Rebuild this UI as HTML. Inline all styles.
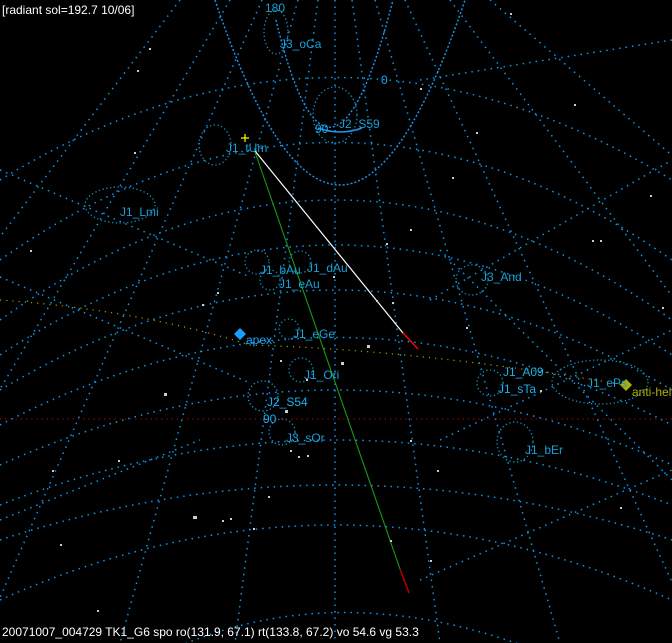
<!DOCTYPE html>
<html><head><meta charset="utf-8"><style>
html,body{margin:0;padding:0;background:#000;width:672px;height:643px;overflow:hidden}
svg{display:block}
text{font-family:"Liberation Sans",sans-serif;font-size:12px}
</style></head><body>
<svg width="672" height="643" viewBox="0 0 672 643" xmlns="http://www.w3.org/2000/svg">
<rect width="672" height="643" fill="#000"/>
<g fill="none" stroke="#0a98f0" stroke-width="1.5" stroke-dasharray="1.5 5">
<!-- parallels -->
<path d="M0,180 Q335,-25 672,180"/>
<path d="M0,260 Q335,25 672,260"/>
<path d="M0,320 Q335,80 672,320"/>
<path d="M0,355 Q335,135 672,355"/>
<path d="M0,390 Q335,190 672,390"/>
<path d="M0,425 Q335,250 672,425"/>
<path d="M0,465 Q335,315 672,465"/>
<path d="M0,505 Q335,375 672,505"/>
<path d="M0,540 Q335,430 672,540"/>
<path d="M0,600 Q335,450 672,600"/>
<path d="M150,660 Q335,565 560,660"/>
<!-- meridians -->
<path d="M180,0 L-200,500"/>
<path d="M230,0 L-150,643"/>
<path d="M262,0 L-20,643"/>
<path d="M298,0 L120,643"/>
<path d="M318,0 L235,643"/>
<path d="M335,0 L335,643"/>
<path d="M352,0 L440,643"/>
<path d="M375,0 L560,643"/>
<path d="M405,0 L700,643"/>
<path d="M450,0 L900,600"/>
<path d="M490,0 L900,350"/>
<!-- extra diagonals -->
<path d="M0,170 L250,277"/>
<path d="M0,277 L250,383"/>
<path d="M420,80 L672,40"/>
<path d="M430,300 L672,160"/>
<path d="M440,440 L672,330"/>
<path d="M420,580 L672,470"/>
<path d="M440,250 L672,480"/>
<path d="M0,520 L200,440"/>
</g>
<!-- U curves -->
<g fill="none" stroke="#1a98f0" stroke-width="1.4" stroke-dasharray="2 2">
<path d="M276,20 Q330,244 393,0"/>
<path d="M215,0 Q340,370 465,0"/>
</g>
<path d="M318,128 Q340,136 362,128" stroke="#1a98f0" stroke-width="1.5" fill="none"/>
<!-- radiant circles -->
<g fill="none" stroke="#1490c0" stroke-width="1.3" stroke-dasharray="1.3 2.5">
<ellipse cx="276" cy="32" rx="12" ry="22"/>
<ellipse cx="335" cy="115" rx="22" ry="28"/>
<ellipse cx="215" cy="145" rx="16" ry="20"/>
<ellipse cx="120" cy="205" rx="35" ry="18"/>
<circle cx="257" cy="262" r="12"/>
<circle cx="300" cy="262" r="11"/>
<circle cx="270" cy="280" r="10"/>
<circle cx="289" cy="329" r="10"/>
<circle cx="301" cy="370" r="12"/>
<circle cx="263" cy="396" r="15" stroke="#1aa0e0"/>
<circle cx="282" cy="432" r="13"/>
<ellipse cx="472" cy="280" rx="16" ry="15"/>
<circle cx="490" cy="383" r="13"/>
<ellipse cx="600" cy="382" rx="48" ry="22"/>
<ellipse cx="515" cy="442" rx="18" ry="20"/>
</g>
<!-- ecliptic & red line -->
<path d="M0,300 Q140,310 250,345 Q420,350 625,385" fill="none" stroke="#a0a000" stroke-width="1.2" stroke-dasharray="1.2 5"/>
<line x1="0" y1="419" x2="672" y2="419" stroke="#a00" stroke-width="1.2" stroke-dasharray="1.2 4"/>
<!-- meteor lines -->
<line x1="255" y1="151" x2="403" y2="333" stroke="#fff" stroke-width="1.2"/>
<line x1="403" y1="333" x2="418" y2="349" stroke="#f00" stroke-width="1.5"/>
<line x1="255" y1="152" x2="400" y2="569" stroke="#1a9a1a" stroke-width="1.1"/>
<line x1="400" y1="569" x2="409" y2="593" stroke="#a00" stroke-width="1.6"/>
<path d="M245,134 V142 M241,138 H249" stroke="#ff0" stroke-width="1.2"/>
<!-- markers -->
<path d="M240,328 L246,334 L240,340 L234,334 Z" fill="#19a0ff"/>
<path d="M626,379 L632,385 L626,391 L620,385 Z" fill="#b0b000"/>
<!-- stars -->
<g fill="#ccc">
<rect x="137" y="70" width="2" height="2"/><rect x="149" y="48" width="2" height="2"/><rect x="217" y="292" width="2" height="2"/><rect x="202" y="304" width="2" height="2"/><rect x="164" y="393" width="3" height="3"/><rect x="193" y="516" width="4" height="3"/><rect x="222" y="520" width="2" height="2"/><rect x="230" y="518" width="2" height="2"/><rect x="253" y="528" width="2" height="2"/><rect x="307" y="455" width="2" height="2"/><rect x="306" y="379" width="2" height="2"/><rect x="333" y="276" width="2" height="2"/><rect x="341" y="362" width="3" height="3"/><rect x="367" y="345" width="3" height="3"/><rect x="376" y="300" width="2" height="2"/><rect x="392" y="302" width="2" height="2"/><rect x="386" y="243" width="2" height="2"/><rect x="410" y="229" width="2" height="2"/><rect x="452" y="177" width="2" height="2"/><rect x="466" y="327" width="2" height="2"/><rect x="600" y="240" width="2" height="2"/><rect x="592" y="240" width="2" height="2"/><rect x="662" y="307" width="2" height="2"/><rect x="620" y="507" width="2" height="2"/><rect x="540" y="390" width="2" height="2"/><rect x="30" y="250" width="2" height="2"/><rect x="52" y="470" width="2" height="2"/><rect x="60" y="544" width="2" height="2"/><rect x="134" y="152" width="2" height="2"/><rect x="574" y="104" width="2" height="2"/><rect x="650" y="195" width="2" height="2"/><rect x="420" y="88" width="2" height="2"/><rect x="476" y="132" width="2" height="2"/><rect x="510" y="13" width="2" height="2"/><rect x="410" y="440" width="2" height="2"/><rect x="437" y="470" width="2" height="2"/><rect x="298" y="456" width="2" height="2"/><rect x="280" y="360" width="2" height="2"/><rect x="430" y="560" width="2" height="2"/><rect x="390" y="540" width="2" height="2"/><rect x="285" y="410" width="3" height="3"/><rect x="290" y="450" width="2" height="2"/><rect x="268" y="496" width="2" height="2"/><rect x="118" y="460" width="2" height="2"/><rect x="97" y="610" width="2" height="2"/>
</g>
<!-- labels -->
<g fill="#1a9fd8">
<text x="265" y="12">180</text>
<text x="280" y="48">J3_oCa</text>
<text x="381" y="84" fill="#1aa8f0">0</text>
<text x="315" y="133" fill="#1aa8f0">90</text>
<text x="339" y="128">J2_S59</text>
<text x="226" y="152">J1_tUm</text>
<text x="120" y="216">J1_Lmi</text>
<text x="260" y="274">J1_bAu</text>
<text x="307" y="272">J1_dAu</text>
<text x="279" y="288">J1_eAu</text>
<text x="481" y="281">J3_And</text>
<text x="246" y="344" fill="#1aa8ff">apex</text>
<text x="293" y="338">J1_eGe</text>
<text x="304" y="379">J1_Ori</text>
<text x="503" y="376" fill="#1ab0f0">J1_A09</text>
<text x="498" y="393" fill="#1ab0f0">J1_sTa</text>
<text x="587" y="387">J1_ePs</text>
<text x="632" y="396" fill="#b0b000">anti-hel</text>
<text x="267" y="406" fill="#1ab0f0">J2_S54</text>
<text x="263" y="423" fill="#1ab0f0">90</text>
<text x="286" y="442">J3_sOr</text>
<text x="525" y="454">J1_bEr</text>
</g>
<text x="2" y="14" fill="#fff">[radiant sol=192.7 10/06]</text>
<text x="2" y="636" fill="#fff">20071007_004729 TK1_G6 spo ro(131.9, 67.1) rt(133.8, 67.2) vo 54.6 vg 53.3</text>
</svg>
</body></html>
